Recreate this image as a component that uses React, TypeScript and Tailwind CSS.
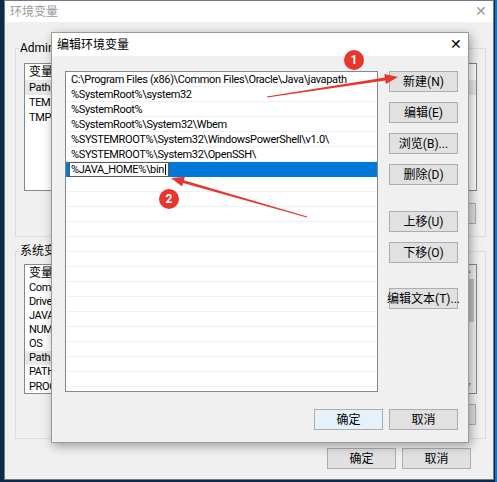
import React from "react";

const font = "font-['Roboto','Noto_Sans_CJK_SC',sans-serif]";
const latin = "text-[11px] tracking-[-0.35px]";

const Btn = ({ label, className = "" }: { label: string; className?: string }) => (
  <div
    className={`flex items-center justify-center w-[69px] h-[21px] bg-[#e1e1e1] border border-[#adadad] text-[12px] text-black whitespace-nowrap ${className}`}
  >
    {label}
  </div>
);

const userVars = ["Path", "TEMP", "TMP"];
const sysVars = ["ComSpec", "DriverData", "JAVA_HOME", "NUMBER_OF_PROCESSORS", "OS", "Path", "PATHEXT", "PROCESSOR_ARCHITECTURE"];

const paths = [
  "C:\\Program Files (x86)\\Common Files\\Oracle\\Java\\javapath",
  "%SystemRoot%\\system32",
  "%SystemRoot%",
  "%SystemRoot%\\System32\\Wbem",
  "%SYSTEMROOT%\\System32\\WindowsPowerShell\\v1.0\\",
  "%SYSTEMROOT%\\System32\\OpenSSH\\",
];

const VarList = ({ rows, height, scroll }: { rows: string[]; height: string; scroll?: boolean }) => (
  <div className={`flex bg-white border border-[#828790] overflow-hidden ${height}`}>
    <div className="flex-1 flex flex-col">
      <div className="flex h-[16px] items-center text-[12px] leading-none">
        <span className="pl-[4px]">变量</span>
      </div>
      {rows.map((r) => (
        <div
          key={r}
          className={`flex h-[15px] items-center leading-none ${latin} ${r === "Path" ? "bg-[#e8e8e8]" : ""}`}
        >
          <span className="pl-[4px] whitespace-nowrap">{r}</span>
        </div>
      ))}
    </div>
    {scroll && (
      <div className="w-[17px] bg-[#f0f0f0] flex flex-col items-center">
        <span className="text-[7px] leading-none text-[#888] mt-[3px]">▲</span>
        <div className="mt-[4px] w-[13px] h-[43px] bg-[#c1c1c1]" />
        <div className="flex-1" />
        <span className="text-[7px] leading-none text-[#888] mb-[3px]">▼</span>
      </div>
    )}
  </div>
);

const GroupButtons = () => (
  <div className="flex justify-end gap-[7px] mr-[1px]">
    <Btn label="新建(N)..." className="h-[20px]" />
    <Btn label="编辑(E)..." className="h-[20px]" />
    <Btn label="删除(D)" className="h-[20px]" />
  </div>
);

export default function App() {
  return (
    <div className={`relative w-[497px] h-[482px] overflow-hidden bg-[#0d2a48] ${font} text-black`}>
      <div className="absolute right-0 top-0 w-[2px] h-full bg-[#1f6fc0]" />

      {/* 环境变量 window */}
      <div className="absolute left-[4px] top-0 w-[490px] h-[480px] flex flex-col bg-[#f0f0f0] border border-[#6d7a88]">
        <div className="flex items-center justify-between h-[21px] bg-white pl-[5px] pr-[6px]">
          <span className="text-[12px] text-[#999]">环境变量</span>
          <span className="text-[14px] text-[#999] font-light">✕</span>
        </div>
        <div className="flex flex-col pl-[10px] pr-[7px]">
          <fieldset className="mt-[18px] border border-[#dcdcdc] px-[8px] pb-[12px]">
            <legend className="ml-[-5px] px-[1px] text-[12px] leading-[16px]">Administrator 的用户变量(U)</legend>
            <div className="pt-[7px]">
              <VarList rows={userVars} height="h-[128px]" />
            </div>
            <div className="mt-[12px]">
              <GroupButtons />
            </div>
          </fieldset>
          <fieldset className="mt-[6px] border border-[#dcdcdc] px-[8px] pb-[13px]">
            <legend className="ml-[-5px] px-[1px] text-[12px] leading-[16px]">系统变量(S)</legend>
            <div className="pt-[5px]">
              <VarList rows={sysVars} height="h-[130px]" scroll />
            </div>
            <div className="mt-[10px]">
              <GroupButtons />
            </div>
          </fieldset>
          <div className="flex justify-end gap-[6px] mt-[9px] pr-[15px]">
            <Btn label="确定" className="h-[20px]" />
            <Btn label="取消" className="h-[20px]" />
          </div>
        </div>
      </div>

      {/* 编辑环境变量 dialog */}
      <div className="absolute left-[51px] top-[32px] w-[418px] h-[411px] flex flex-col bg-[#f0f0f0] border border-[#9a9a9a] shadow-[2px_3px_10px_rgba(0,0,0,0.35)]">
        <div className="flex items-center justify-between h-[23px] bg-white pl-[5px] pr-[6px]">
          <span className="text-[12px]">编辑环境变量</span>
          <span className="text-[14px] font-light">✕</span>
        </div>
        <div className="flex flex-col pl-[13px] pr-[10px] pt-[15px]">
          <div className="flex gap-[11px]">
            <div className="w-[313px] h-[321px] bg-white border border-[#828790] flex flex-col overflow-hidden">
              {paths.map((p) => (
                <div
                  key={p}
                  className={`h-[15px] shrink-0 flex items-center pl-[5px] border-b border-[#f0f0f0] leading-none whitespace-nowrap ${latin}`}
                >
                  {p}
                </div>
              ))}
              <div className="h-[15px] shrink-0 flex items-center bg-[#0078d7] pl-[3px]">
                <div className={`w-[100px] h-[15px] bg-white border border-[#5a5a5a] flex items-center pl-[1px] leading-none whitespace-nowrap ${latin}`}>
                  %JAVA_HOME%\bin
                  <span className="w-[1px] h-[11px] bg-black ml-[1px]" />
                </div>
              </div>
              {Array.from({ length: 15 }).map((_, i) => (
                <div key={i} className="h-[15px] shrink-0 border-b border-[#f0f0f0]" />
              ))}
            </div>
            <div className="flex flex-col">
              <Btn label="新建(N)" />
              <Btn label="编辑(E)" className="mt-[10px]" />
              <Btn label="浏览(B)..." className="mt-[10px]" />
              <Btn label="删除(D)" className="mt-[10px]" />
              <Btn label="上移(U)" className="mt-[26px]" />
              <Btn label="下移(O)" className="mt-[10px]" />
              <Btn label="编辑文本(T)..." className="mt-[25px]" />
            </div>
          </div>
          <div className="flex justify-end gap-[6px] mt-[17px]">
            <Btn label="确定" className="h-[20px] bg-[#e5f1fb] border-[#0078d7]" />
            <Btn label="取消" className="h-[20px]" />
          </div>
        </div>
      </div>

      {/* annotations */}
      <svg className="absolute inset-0 pointer-events-none" width="497" height="482" viewBox="0 0 497 482">
        <polygon
          fill="#e8352d"
          points="266.9,96.5 384.9,77.5 384.4,74 398,77 385.9,83.9 385.4,80.4 267.1,97.5"
        />
        <polygon
          fill="#e8352d"
          points="307.1,216.5 183.9,180.2 184.9,176.8 171,178 182.1,186.4 183.1,183 306.9,217.5"
        />
      </svg>
      <div className="absolute left-[344px] top-[50px] w-[20px] h-[20px] rounded-full bg-[#e8352d] flex items-center justify-center text-white text-[12px] font-bold leading-none">
        1
      </div>
      <div className="absolute left-[159px] top-[189px] w-[20px] h-[20px] rounded-full bg-[#e8352d] flex items-center justify-center text-white text-[12px] font-bold leading-none">
        2
      </div>
    </div>
  );
}
